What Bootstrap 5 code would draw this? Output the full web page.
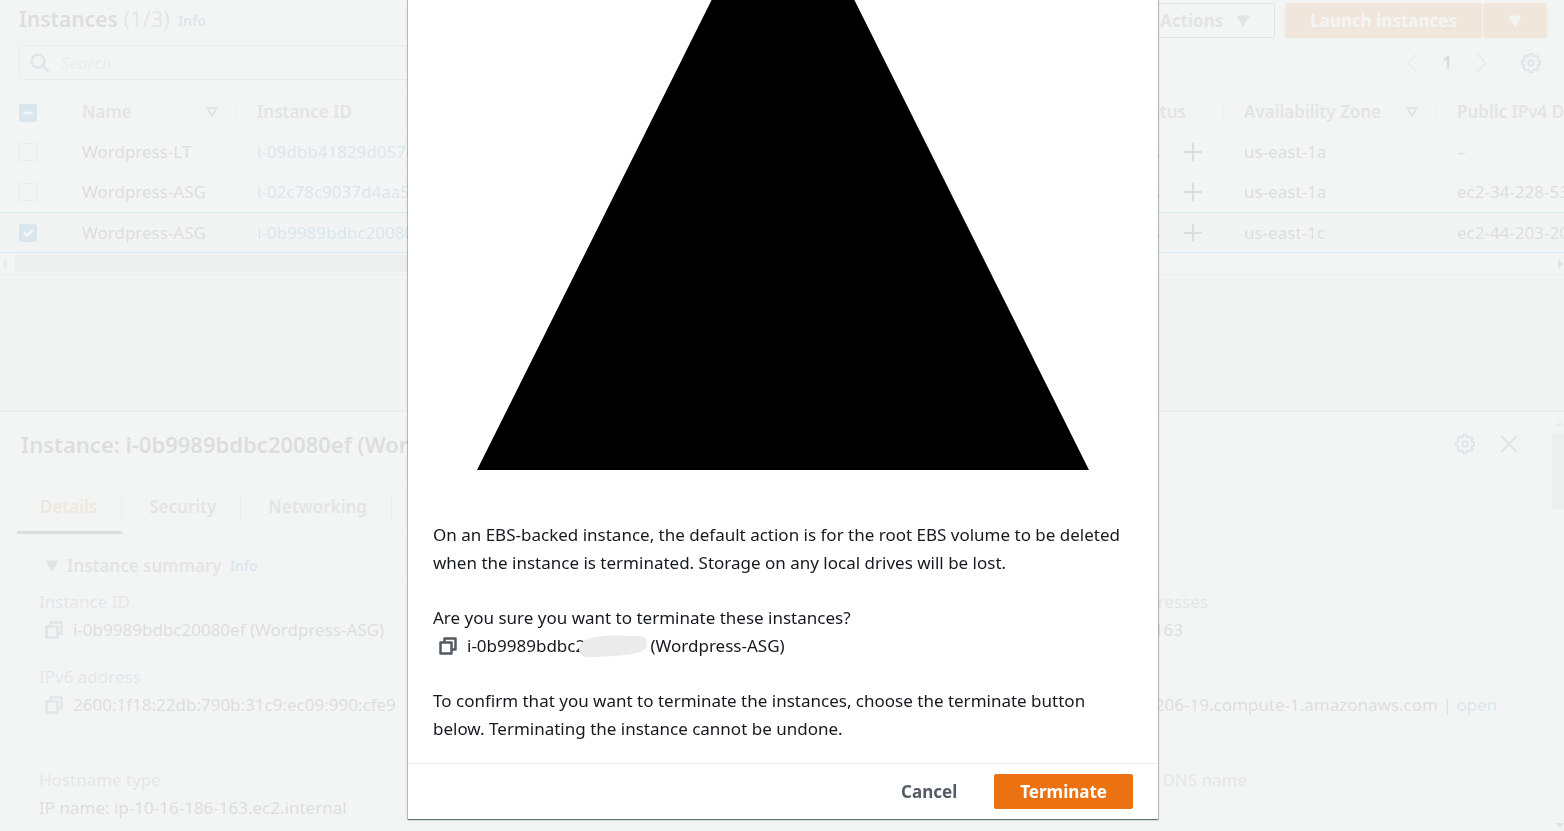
<!DOCTYPE html>
<html lang="en">
<head>
<meta charset="utf-8">
<meta name="viewport" content="width=device-width, initial-scale=1">
<title>Instances</title>
<link href="https://cdn.jsdelivr.net/npm/bootstrap@5.3.0/dist/css/bootstrap.min.css" rel="stylesheet">
<style>
:root{--ink:#16191f;--muted:#545b64;--hair:#eaeded;--blue:#0073bb;--orange:#ec7211}
body{font-family:"Noto Sans","Open Sans",sans-serif;font-size:17px;line-height:28px;color:var(--ink);background:#f2f3f3}
a{color:var(--blue);text-decoration:none}
svg{display:block;flex:none}
.app-shell{height:100vh;overflow:hidden}
.list-panel{background:#fff;border-bottom:1px solid #aab7b8}
.panel-title{font-size:22px;line-height:30px;font-weight:600}
.list-title{font-size:21px}
.list-title span{font-size:22px;font-weight:400;color:#687078}
.info-link{font-size:14px;font-weight:600}
.bar-row{height:35px}
.bar-top{margin:3px 17px 7px 19px}
.bar-filter{margin:0 15px 13px 19px}
.cta{--bs-btn-font-size:17px;--bs-btn-font-weight:700;--bs-btn-line-height:25px;--bs-btn-padding-y:4px;--bs-btn-padding-x:24px;--bs-btn-border-radius:2px;--bs-btn-color:var(--muted);--bs-btn-border-color:var(--muted);height:35px}
.cta-orange{--bs-btn-color:#fff;--bs-btn-bg:var(--orange);--bs-btn-border-color:var(--orange);--bs-btn-hover-bg:#eb5f07;--bs-btn-hover-color:#fff}
.cta-plain{--bs-btn-border-color:transparent}
.cta-menu{gap:13px;margin-right:10px}
.cta-split{margin-left:1px}
.search-box{width:620px;border:1px solid #aab7b8;border-radius:2px;padding-left:10px}
.search-box input{font-size:17px;padding:0 0 0 11px;line-height:28px}
.search-box input::placeholder{font-style:italic;color:#aab7b8}
.rule{width:1px;background:var(--hair)}
.icon-btn{border:0;background:none;padding:0;color:var(--muted)}
.pale{color:#aab7b8}
.grid-wrap{overflow:hidden}
.grid{table-layout:fixed;width:1720px;margin:0;border-collapse:separate;border-spacing:0;white-space:nowrap}
.grid th,.grid td{padding:0 21px;height:40px;line-height:28px;border-bottom:1px solid var(--hair);overflow:hidden}
.grid th{height:39px;padding:0 17px 2px 21px;font-weight:600;color:var(--muted);border-top:1px solid var(--hair);background:#fafafa;position:relative}
.grid th+th::before{content:"";position:absolute;left:0;top:10px;height:18px;width:1px;background:#d5dbdb}
.grid th:first-child,.grid td:first-child{padding:0 19px}
.grid tr.before-picked td{height:41px;padding-bottom:1px;border-bottom-color:#00a1c9}
.grid tr.picked td{background:#f1faff;border-bottom-color:#00a1ff;height:40px}
.grid .tick[type=checkbox]{width:18px;height:18px;margin:1px 0 0;border-color:#aab7b8;border-radius:2px;display:block}
.grid .tick[type=checkbox]:checked,.grid .tick[type=checkbox]:indeterminate{background-color:var(--blue);border-color:var(--blue);background-size:18px}
.h-scroll{height:21px;background:#fafafa}
.h-thumb{width:900px;height:17px;background:#c1c1c1}
.detail-panel{margin-top:136px;background:#fff;border-top:1px solid #aab7b8;min-height:0}
.detail-head{height:70px;padding:0 26px 6px 21px}
.tab-card{margin:0 20px 0 13px;border:1px solid var(--hair);border-bottom:0}
.tab-strip{height:52px;padding-left:3px;border-bottom:1px solid var(--hair)}
.tab-strip .nav-link{position:relative;padding:10px 25px 11px 27px;font-weight:600;color:var(--muted);line-height:28px}
.tab-strip .nav-link::after{content:"";position:absolute;right:0;top:11px;height:28px;width:1px;background:#aab7b8}
.tab-strip .nav-link.active{padding-left:23px;color:var(--orange);border-bottom:3px solid var(--ink)}
.summary{margin:17px 26px 0 25px}
.summary-head{padding:0 0 3px 6px;border-bottom:1px solid var(--hair);font-weight:600;color:var(--muted)}
.facts dt{font-weight:400;color:#687078}
.facts dd{margin:0;white-space:nowrap}
.facts dd svg{color:var(--muted);margin:0 10px 0 6px}
.facts .col-4:last-child{padding-left:12px}
.fact-row{margin-bottom:19px}
.fact-row.tall{margin-bottom:47px}
.v-scroll{width:12px;background:#fafafa;padding:9px 0 3px}
.v-thumb{height:76px;background:#c1c1c1;margin-top:7px}
.veil{background:rgba(242,243,243,.9);z-index:10}
.dialog-layer{z-index:20;padding-bottom:12px}
.dialog-box{width:750px;background:#fff;margin-left:2px;box-shadow:0 1px 1px 0 rgba(0,28,36,.5),0 0 1px 1px rgba(0,28,36,.2)}
.dialog-main{padding:0 25px 20px}
.dialog-main p,.dialog-ask{margin:0 0 27px}
.dialog-main svg.warning{flex:1 1 0;min-height:0;width:100%;margin-bottom:51px}
.dialog-foot{border-top:1px solid var(--hair);padding:10px 25px;gap:11px}
.dialog-foot .cta{--bs-btn-padding-x:25px}
.dialog-id svg.copy{margin:0 10px 0 6px}
.redacted{position:relative;width:75px;height:28px}
.redacted svg{position:absolute;left:3px;top:3px}
</style>
</head>
<body>
<svg class="d-none" aria-hidden="true">
  <symbol id="gear" viewBox="0 0 20 20"><g fill="none" stroke="currentColor" stroke-width="2"><path stroke-linejoin="round" d="M8.400 1h3.200l.6 2 1.200.5 1.800-1 2.300 2.300-1 1.800.5 1.200 2 .6v3.200l-2 .6-.5 1.200 1 1.800-2.300 2.300-1.800-1-1.200.5-.6 2H8.400l-.6-2-1.200-.5-1.800 1-2.300-2.300 1-1.800-.5-1.200-2-.6V8.400l2-.6.5-1.200-1-1.800 2.300-2.300 1.800 1 1.200-.5z"/><circle cx="10" cy="10" r="2.700"/></g></symbol>
  <symbol id="copy" viewBox="0 0 18 18"><path fill="none" stroke="currentColor" stroke-width="2.500" stroke-linejoin="round" d="M1.500 5.500h11v11h-11zM5.500 5V1.500h11v11H13"/></symbol>
  <symbol id="down" viewBox="0 0 14 12"><path fill="currentColor" stroke="currentColor" stroke-linejoin="round" d="M1 1h12L7 11z"/></symbol>
  <symbol id="sort" viewBox="0 0 14 12"><path fill="none" stroke="currentColor" stroke-width="2" stroke-linejoin="round" d="M2 2h10L7 10z"/></symbol>
  <symbol id="plus" viewBox="0 0 18 18"><path stroke="currentColor" stroke-width="2" d="M9 0v18M0 9h18"/></symbol>
</svg>

<div class="app-shell d-flex flex-column">
  <section class="list-panel">
    <div class="bar-top bar-row d-flex">
      <h1 class="panel-title list-title mb-0">Instances <span>(1/3)</span></h1>
      <a href="#" class="info-link ms-2 pt-1">Info</a>
      <div class="ms-auto d-flex">
        <button class="btn cta cta-menu d-flex align-items-center">Actions <svg width="14" height="12"><use href="#down"/></svg></button>
        <button class="btn cta cta-orange">Launch instances</button>
        <button class="btn cta cta-orange cta-split d-flex align-items-center" aria-label="Launch options"><svg width="14" height="12"><use href="#down"/></svg></button>
      </div>
    </div>
    <div class="bar-filter bar-row d-flex align-items-center">
      <div class="search-box h-100 d-flex align-items-center">
        <svg width="20" height="20" viewBox="0 0 20 20" fill="none" stroke="#545b64" stroke-width="2.500"><circle cx="8" cy="8" r="6.500"/><path d="M12.500 12.500 18.500 18.500"/></svg>
        <input type="search" class="form-control border-0 bg-transparent shadow-none" placeholder="Search" aria-label="Search">
      </div>
      <nav class="ms-auto h-100 d-flex align-items-center" aria-label="Pages">
        <button class="icon-btn pale" aria-label="Previous"><svg width="12" height="20" viewBox="0 0 12 20" fill="none" stroke="currentColor" stroke-width="2"><path d="M11 1 2 10l9 9"/></svg></button>
        <b class="px-4">1</b>
        <button class="icon-btn pale" aria-label="Next"><svg width="12" height="20" viewBox="0 0 12 20" fill="none" stroke="currentColor" stroke-width="2"><path d="m1 1 9 9-9 9"/></svg></button>
        <span class="rule h-100 ms-3 me-3"></span>
        <button class="icon-btn me-2" aria-label="Preferences"><svg width="20" height="20"><use href="#gear"/></svg></button>
      </nav>
    </div>
    <div class="grid-wrap">
      <table class="grid">
        <colgroup><col style="width:61px"><col style="width:175px"><col style="width:232px"><col style="width:180px"><col style="width:170px"><col style="width:188px"><col style="width:217px"><col style="width:213px"><col></colgroup>
        <thead><tr>
          <th><input class="form-check-input tick" type="checkbox" id="all" aria-label="Select all"></th>
          <th><span class="d-flex justify-content-between align-items-center">Name <svg width="14" height="12"><use href="#sort"/></svg></span></th>
          <th>Instance ID</th><th>Instance state</th><th>Instance type</th><th>Status check</th>
          <th><span class="d-block text-end pe-3 me-1">Alarm status</span></th>
          <th><span class="d-flex justify-content-between align-items-center">Availability Zone <svg width="14" height="12"><use href="#sort"/></svg></span></th>
          <th>Public IPv4 DNS</th>
        </tr></thead>
        <tbody>
          <tr><td><input class="form-check-input tick" type="checkbox" aria-label="Wordpress-LT"></td><td>Wordpress-LT</td><td><a href="#">i-09dbb41829d057c1a</a></td><td>Running</td><td>t2.micro</td><td>2/2 checks</td>
            <td><span class="d-flex justify-content-end align-items-center gap-4">No alarms <svg width="18" height="18"><use href="#plus"/></svg></span></td><td>us-east-1a</td><td>–</td></tr>
          <tr class="before-picked"><td><input class="form-check-input tick" type="checkbox" aria-label="Wordpress-ASG, first"></td><td>Wordpress-ASG</td><td><a href="#">i-02c78c9037d4aa5</a></td><td>Running</td><td>t2.micro</td><td>2/2 checks</td>
            <td><span class="d-flex justify-content-end align-items-center gap-4">No alarms <svg width="18" height="18"><use href="#plus"/></svg></span></td><td>us-east-1a</td><td>ec2-34-228-53-110.compute-1</td></tr>
          <tr class="picked"><td><input class="form-check-input tick" type="checkbox" checked aria-label="Wordpress-ASG, second"></td><td>Wordpress-ASG</td><td><a href="#">i-0b9989bdbc20080ef</a></td><td>Running</td><td>t2.micro</td><td>2/2 checks</td>
            <td><span class="d-flex justify-content-end align-items-center gap-4">No alarms <svg width="18" height="18"><use href="#plus"/></svg></span></td><td>us-east-1c</td><td>ec2-44-203-206-19.compute-1</td></tr>
        </tbody>
      </table>
    </div>
    <div class="h-scroll d-flex align-items-center">
      <svg width="15" height="10" viewBox="0 0 15 10"><path fill="#a3a3a3" d="M7 0v10L2 5z"/></svg>
      <div class="h-thumb"></div>
      <svg class="ms-auto" width="6" height="10" viewBox="0 0 6 10"><path fill="#505050" d="M0 0v10l5-5z"/></svg>
    </div>
  </section>

  <section class="detail-panel flex-fill d-flex">
    <div class="flex-fill">
      <div class="detail-head d-flex align-items-center">
        <h2 class="panel-title mb-0">Instance: i-0b9989bdbc20080ef (Wordpress-ASG)</h2>
        <button class="icon-btn ms-auto" aria-label="Panel settings"><svg width="20" height="20"><use href="#gear"/></svg></button>
        <span class="rule align-self-stretch my-3 mx-2"></span>
        <button class="icon-btn mx-2" aria-label="Close panel"><svg width="18" height="18" viewBox="0 0 18 18" stroke="currentColor" stroke-width="2"><path d="m1 1 16 16M17 1 1 17"/></svg></button>
      </div>
      <div class="tab-card">
        <nav class="tab-strip nav flex-nowrap">
          <a class="nav-link active" href="#">Details</a><a class="nav-link" href="#">Security</a><a class="nav-link" href="#">Networking</a><a class="nav-link" href="#">Storage</a>
        </nav>
        <div class="summary">
          <div class="summary-head d-flex align-items-center"><svg class="me-2" width="14" height="12"><use href="#down"/></svg>Instance summary<a href="#" class="info-link ms-2">Info</a></div>
          <dl class="facts mb-0 pt-1">
            <div class="row gx-0 fact-row">
              <div class="col-8"><dt>Instance ID</dt><dd class="d-flex align-items-center"><svg width="18" height="18"><use href="#copy"/></svg>i-0b9989bdbc20080ef (Wordpress-ASG)</dd></div>
              <div class="col-4"><dt>Private IPv4 addresses</dt><dd class="d-flex align-items-center"><svg width="18" height="18"><use href="#copy"/></svg>10.116.186.163</dd></div>
            </div>
            <div class="row gx-0 fact-row tall">
              <div class="col-8"><dt>IPv6 address</dt><dd class="d-flex align-items-center"><svg width="18" height="18"><use href="#copy"/></svg>2600:1f18:22db:790b:31c9:ec09:990:cfe9</dd></div>
              <div class="col-4"><dt>Public IPv4 DNS</dt><dd class="d-flex align-items-center"><svg width="18" height="18"><use href="#copy"/></svg><span>ec2-44-203-206-19.compute-1.amazonaws.com | <a href="#">open</a></span></dd></div>
            </div>
            <div class="row gx-0">
              <div class="col-8"><dt>Hostname type</dt><dd>IP name: ip-10-16-186-163.ec2.internal</dd></div>
              <div class="col-4"><dt>Private resource DNS name</dt></div>
            </div>
          </dl>
        </div>
      </div>
    </div>
    <div class="v-scroll d-flex flex-column">
      <svg class="ms-1" width="8" height="5" viewBox="0 0 8 5"><path fill="#a3a3a3" d="M0 5h8L4 0z"/></svg>
      <div class="v-thumb"></div>
      <svg class="ms-1 mt-auto" width="8" height="5" viewBox="0 0 8 5"><path fill="#505050" d="M0 0h8L4 5z"/></svg>
    </div>
  </section>
</div>

<div class="veil position-fixed top-0 bottom-0 start-0 end-0"></div>
<div class="dialog-layer position-fixed top-0 bottom-0 start-0 end-0 d-flex justify-content-center">
  <div class="dialog-box d-flex flex-column" role="dialog" aria-modal="true" aria-label="Terminate instance">
    <div class="dialog-main flex-fill d-flex flex-column">
      <svg class="warning" viewBox="0 0 700 613" preserveAspectRatio="xMidYMax slice"><path d="M350 0 656 613H44z"/></svg>
      <p>On an EBS-backed instance, the default action is for the root EBS volume to be deleted<br>when the instance is terminated. Storage on any local drives will be lost.</p>
      <div class="dialog-ask">
        <div>Are you sure you want to terminate these instances?</div>
        <div class="dialog-id d-flex align-items-center"><svg class="copy" width="18" height="18" color="#545b64"><use href="#copy"/></svg><span>i-0b9989bdbc</span><span class="redacted">2<svg width="70" height="23" viewBox="0 0 70 23"><path fill="#ebebeb" d="M1 15C0 8 7 4 18 2 30 0 42 0 52 1c9 0 16-1 17 6 1 8-6 10-15 12-13 2-26 3-40 3-8 0-12-1-13-7z"/></svg></span><span>(Wordpress-ASG)</span></div>
      </div>
      <p class="mb-0">To confirm that you want to terminate the instances, choose the terminate button<br>below. Terminating the instance cannot be undone.</p>
    </div>
    <div class="dialog-foot d-flex justify-content-end">
      <button class="btn cta cta-plain">Cancel</button>
      <button class="btn cta cta-orange">Terminate</button>
    </div>
  </div>
</div>
<script src="https://cdn.jsdelivr.net/npm/bootstrap@5.3.0/dist/js/bootstrap.bundle.min.js"></script>
<script>document.getElementById('all').indeterminate = true;</script>
</body>
</html>
